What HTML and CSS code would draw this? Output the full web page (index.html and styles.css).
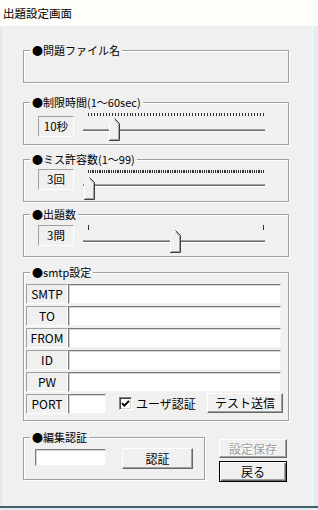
FILE: index.html
```html
<!DOCTYPE html>
<html lang="ja">
<head>
<meta charset="utf-8">
<title>出題設定画面</title>
<link rel="stylesheet" href="styles.css">
</head>
<body>
<div class="window">
  <div class="titlebar">出題設定画面</div>
  <div class="frame">
    <div class="edge-left"></div>
    <div class="client">
      <div class="group g-file">
        <div class="legend">●問題ファイル名</div>
      </div>

      <div class="group g-time">
        <div class="legend">●制限時間(1～60sec)</div>
        <div class="slider-row sr-time">
          <div class="valbox">10秒</div>
          <div class="slider sl-time">
            <div class="ticks ticks-60"></div>
            <div class="track"></div>
            <div class="thumb" style="left:28px">
              <svg width="11" height="23" viewBox="0 0 11 23"><polygon points="0.5,22.5 0.5,5.5 5.5,0.5 10.5,5.5 10.5,22.5" fill="#f0f0f0"/><polyline points="0.5,22 0.5,5.5 5.5,0.5" fill="none" stroke="#fff"/><polyline points="5.5,0.5 10.5,5.5 10.5,22.5 0,22.5" fill="none" stroke="#404040"/><polyline points="5.5,1.9 9.5,5.9 9.5,21.5 1,21.5" fill="none" stroke="#a0a0a0"/></svg>
            </div>
          </div>
        </div>
      </div>

      <div class="group g-miss">
        <div class="legend">●ミス許容数(1～99)</div>
        <div class="slider-row sr-miss">
          <div class="valbox">3回</div>
          <div class="slider sl-miss">
            <div class="ticks ticks-99"></div>
            <div class="track"></div>
            <div class="thumb" style="left:3px">
              <svg width="11" height="23" viewBox="0 0 11 23"><polygon points="0.5,22.5 0.5,5.5 5.5,0.5 10.5,5.5 10.5,22.5" fill="#f0f0f0"/><polyline points="0.5,22 0.5,5.5 5.5,0.5" fill="none" stroke="#fff"/><polyline points="5.5,0.5 10.5,5.5 10.5,22.5 0,22.5" fill="none" stroke="#404040"/><polyline points="5.5,1.9 9.5,5.9 9.5,21.5 1,21.5" fill="none" stroke="#a0a0a0"/></svg>
            </div>
          </div>
        </div>
      </div>

      <div class="group g-count">
        <div class="legend">●出題数</div>
        <div class="slider-row sr-count">
          <div class="valbox">3問</div>
          <div class="slider sl-count">
            <div class="ticks ticks-3"></div>
            <div class="track"></div>
            <div class="thumb" style="left:89px">
              <svg width="11" height="23" viewBox="0 0 11 23"><polygon points="0.5,22.5 0.5,5.5 5.5,0.5 10.5,5.5 10.5,22.5" fill="#f0f0f0"/><polyline points="0.5,22 0.5,5.5 5.5,0.5" fill="none" stroke="#fff"/><polyline points="5.5,0.5 10.5,5.5 10.5,22.5 0,22.5" fill="none" stroke="#404040"/><polyline points="5.5,1.9 9.5,5.9 9.5,21.5 1,21.5" fill="none" stroke="#a0a0a0"/></svg>
            </div>
          </div>
        </div>
      </div>

      <div class="group g-smtp">
        <div class="legend">●smtp設定</div>
        <div class="smtp-rows">
          <div class="field-row"><div class="fieldlabel">SMTP</div><div class="input input-wide"></div></div>
          <div class="field-row"><div class="fieldlabel">TO</div><div class="input input-wide"></div></div>
          <div class="field-row"><div class="fieldlabel">FROM</div><div class="input input-wide"></div></div>
          <div class="field-row"><div class="fieldlabel">ID</div><div class="input input-wide"></div></div>
          <div class="field-row"><div class="fieldlabel">PW</div><div class="input input-wide"></div></div>
          <div class="field-row">
            <div class="fieldlabel">PORT</div>
            <div class="input input-port"></div>
            <div class="check">
              <svg width="11" height="11" viewBox="0 0 11 11"><polyline points="2,5.2 4.3,7.6 9,2.8" fill="none" stroke="#000" stroke-width="1.9"/></svg>
            </div>
            <div class="check-label">ユーザ認証</div>
            <div class="btn btn-test">テスト送信</div>
          </div>
        </div>
      </div>

      <div class="bottom-row">
        <div class="group g-auth">
          <div class="legend">●編集認証</div>
          <div class="auth-row">
            <div class="input input-auth"></div>
            <div class="btn btn-auth">認証</div>
          </div>
        </div>
        <div class="side-buttons">
          <div class="btn btn-save">設定保存</div>
          <div class="btn btn-back">戻る</div>
        </div>
      </div>
    </div>
    <div class="edge-right"></div>
  </div>
  <div class="bottom-edge"></div>
  <div class="bottom-light"></div>
</div>
</body>
</html>
```

FILE: styles.css
```css
* { box-sizing: border-box; }
html, body { margin: 0; padding: 0; }
body {
  width: 318px;
  height: 510px;
  overflow: hidden;
  background: #f0f0f0;
  color: #000;
  font-family: "Noto Sans CJK JP", "Noto Sans", sans-serif;
}
.window { display: flex; flex-direction: column; width: 318px; height: 510px; }
.titlebar {
  height: 26px;
  background: #fdfdfa;
  font-size: 11.5px;
  line-height: 26px;
  padding-left: 3px;
}
.frame { display: flex; height: 480px; }
.edge-left { width: 2px; background: #dfe9f3; }
.client {
  width: 310px;
  background: #f0f0f0;
  padding-left: 21px;
  display: flex;
  flex-direction: column;
}
.edge-right { width: 6px; background: #e3edf7; border-left: 1px solid #f4f8fc; }
.bottom-edge { height: 2px; background: #455f6a; }
.bottom-light { height: 2px; background: #dfe9f3; }

.group {
  width: 266px;
  border: 1px solid #a0a0a0;
  box-shadow: inset 1px 1px 0 #fff, 1px 1px 0 #fff;
}
.legend {
  width: max-content;
  margin: -8px 0 0 6px;
  padding: 0 2px;
  height: 14px;
  line-height: 14px;
  font-size: 11px;
  background: #f0f0f0;
  white-space: nowrap;
}
.g-file { margin-top: 24px; height: 33px; }
.g-time { margin-top: 19px; height: 43px; }
.g-miss { margin-top: 14px; height: 43px; }
.g-count { margin-top: 12px; height: 43px; }
.g-smtp { margin-top: 15px; height: 149px; }

.slider-row { display: flex; align-items: flex-start; padding-left: 14px; }
.sr-time { margin-top: 7px; }
.sr-miss { margin-top: 3px; }
.sr-count { margin-top: 4px; }
.valbox {
  width: 36px;
  height: 21px;
  border-style: solid;
  border-width: 1px;
  border-color: #a0a0a0 #fff #fff #a0a0a0;
  text-align: center;
  font-size: 11.5px;
  line-height: 19px;
}
.slider { position: relative; width: 186px; height: 30px; margin-left: 7px; }
.sl-time { margin-top: -3px; }
.sl-miss { margin-top: 1px; }
.sl-count { margin-top: 0; }
.ticks { margin-left: 7px; width: 176px; height: 3px; }
.ticks-60 { background: repeating-linear-gradient(90deg, #333 0 1px, transparent 1px 2.9661px); }
.ticks-99 { background: repeating-linear-gradient(90deg, #333 0 1px, transparent 1px 1.7857px); }
.ticks-3 { height: 5px; background: repeating-linear-gradient(90deg, #333 0 1px, transparent 1px 87.5px); }
.track {
  margin: 13px 0 0 2px;
  width: 182px;
  height: 3px;
  border-top: 1px solid #a0a0a0;
  border-bottom: 1px solid #fff;
  background: #6d6d6d;
}
.sl-miss .track { margin-top: 11px; }
.sl-count .track { margin-top: 10px; }
.thumb { position: absolute; top: 5px; width: 11px; height: 23px; }
.sl-miss .thumb { top: 7px; }
.thumb svg { display: block; }

.smtp-rows { margin-top: 5px; padding-left: 2px; display: flex; flex-direction: column; gap: 2px; }
.field-row { display: flex; align-items: flex-start; height: 20px; }
.fieldlabel {
  width: 42px;
  height: 20px;
  border-style: solid;
  border-width: 1px;
  border-color: #a0a0a0 #fff #fff #a0a0a0;
  text-align: center;
  font-size: 12px;
  line-height: 18px;
}
.input {
  height: 20px;
  background: #fff;
  border-style: solid;
  border-width: 1px;
  border-color: #7a7a7a #f4f4f4 #f4f4f4 #7a7a7a;
  box-shadow: inset 1px 1px 0 #d4d4d4;
}
.input-wide { width: 213px; }
.input-port { width: 38px; }
.check {
  margin: 3px 0 0 13px;
  width: 13px;
  height: 13px;
  background: #fff;
  border-style: solid;
  border-width: 1px;
  border-color: #808080 #fff #fff #808080;
  box-shadow: inset 1px 1px 0 #404040, inset -1px -1px 0 #d4d4d4;
}
.check svg { display: block; margin: 0; }
.check-label { margin-left: 4px; font-size: 12px; line-height: 20px; white-space: nowrap; }

.btn {
  background: #f0f0f0;
  border-style: solid;
  border-width: 1px;
  border-color: #fff #696969 #696969 #fff;
  box-shadow: inset -1px -1px 0 #a0a0a0;
  text-align: center;
  font-size: 12px;
  white-space: nowrap;
}
.btn-test { margin: -1px 5px 0 auto; width: 76px; height: 20px; line-height: 18px; }

.bottom-row { margin-top: 16px; display: flex; align-items: flex-start; }
.g-auth { width: 182px; height: 43px; }
.auth-row { margin-top: 5px; padding-left: 11px; display: flex; align-items: flex-start; }
.input-auth { width: 71px; height: 17px; }
.btn-auth { margin: -1px 0 0 16px; width: 71px; height: 21px; line-height: 19px; }

.side-buttons { margin: 2px 0 0 14px; display: flex; flex-direction: column; gap: 3px; }
.btn-save {
  width: 68px;
  height: 19px;
  line-height: 17px;
  color: #a0a0a0;
  text-shadow: 1px 1px 0 #fff;
}
.btn-back {
  width: 68px;
  height: 21px;
  line-height: 19px;
  border: 1px solid #000;
  box-shadow: inset 1px 1px 0 #fff, inset -1px -1px 0 #696969, inset -2px -2px 0 #a0a0a0;
}
```
